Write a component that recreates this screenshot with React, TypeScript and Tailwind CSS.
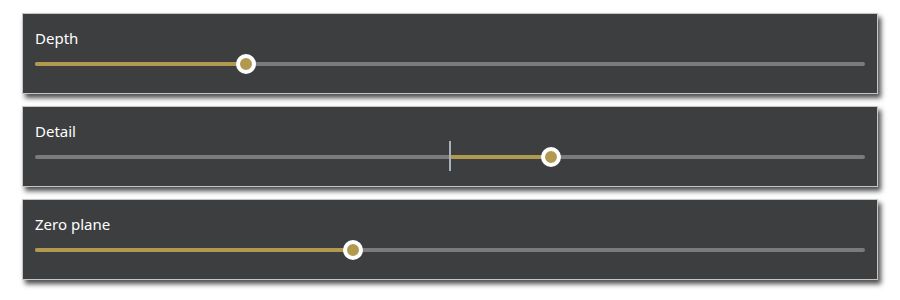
import React from "react";

type SliderProps = { label: string; value: number; center?: boolean };

function Slider({ label, value, center }: SliderProps) {
  const pct = value * 100;
  const start = center ? Math.min(50, pct) : 0;
  const end = center ? Math.max(50, pct) : pct;
  return (
    <div className="h-[81px] border border-[#c6c6c6] bg-[#3d3e40] shadow-[3px_4px_5px_rgba(0,0,0,0.7)] px-[12px] pt-[14px]">
      <div className="text-[15px] leading-[20px] text-white" style={{ fontFamily: '"Noto Sans", "Open Sans", sans-serif' }}>
        {label}
      </div>
      <div className="relative mt-[6px] h-[20px]">
        <div className="absolute left-0 right-0 top-[8px] h-[4px] rounded-full bg-[#7b7b7b]" />
        <div
          className="absolute top-[8px] h-[4px] rounded-full bg-[#b19a50]"
          style={{ left: `${start}%`, width: `${end - start}%` }}
        />
        {center && (
          <div className="absolute left-1/2 top-[-6px] h-[30px] w-[2px] -translate-x-1/2 bg-[#a9b1ba]" />
        )}
        <div
          className="absolute top-0 h-[20px] w-[20px] -translate-x-1/2 rounded-full border-[4px] border-white bg-[#b19a50]"
          style={{ left: `${pct}%` }}
        />
      </div>
    </div>
  );
}

export default function App() {
  return (
    <div className="w-[900px] h-[300px] bg-white pl-[22px] pr-[22px] pt-[13px] flex flex-col gap-[12px]">
      <Slider label="Depth" value={0.254} />
      <Slider label="Detail" value={0.622} center />
      <Slider label="Zero plane" value={0.383} />
    </div>
  );
}
